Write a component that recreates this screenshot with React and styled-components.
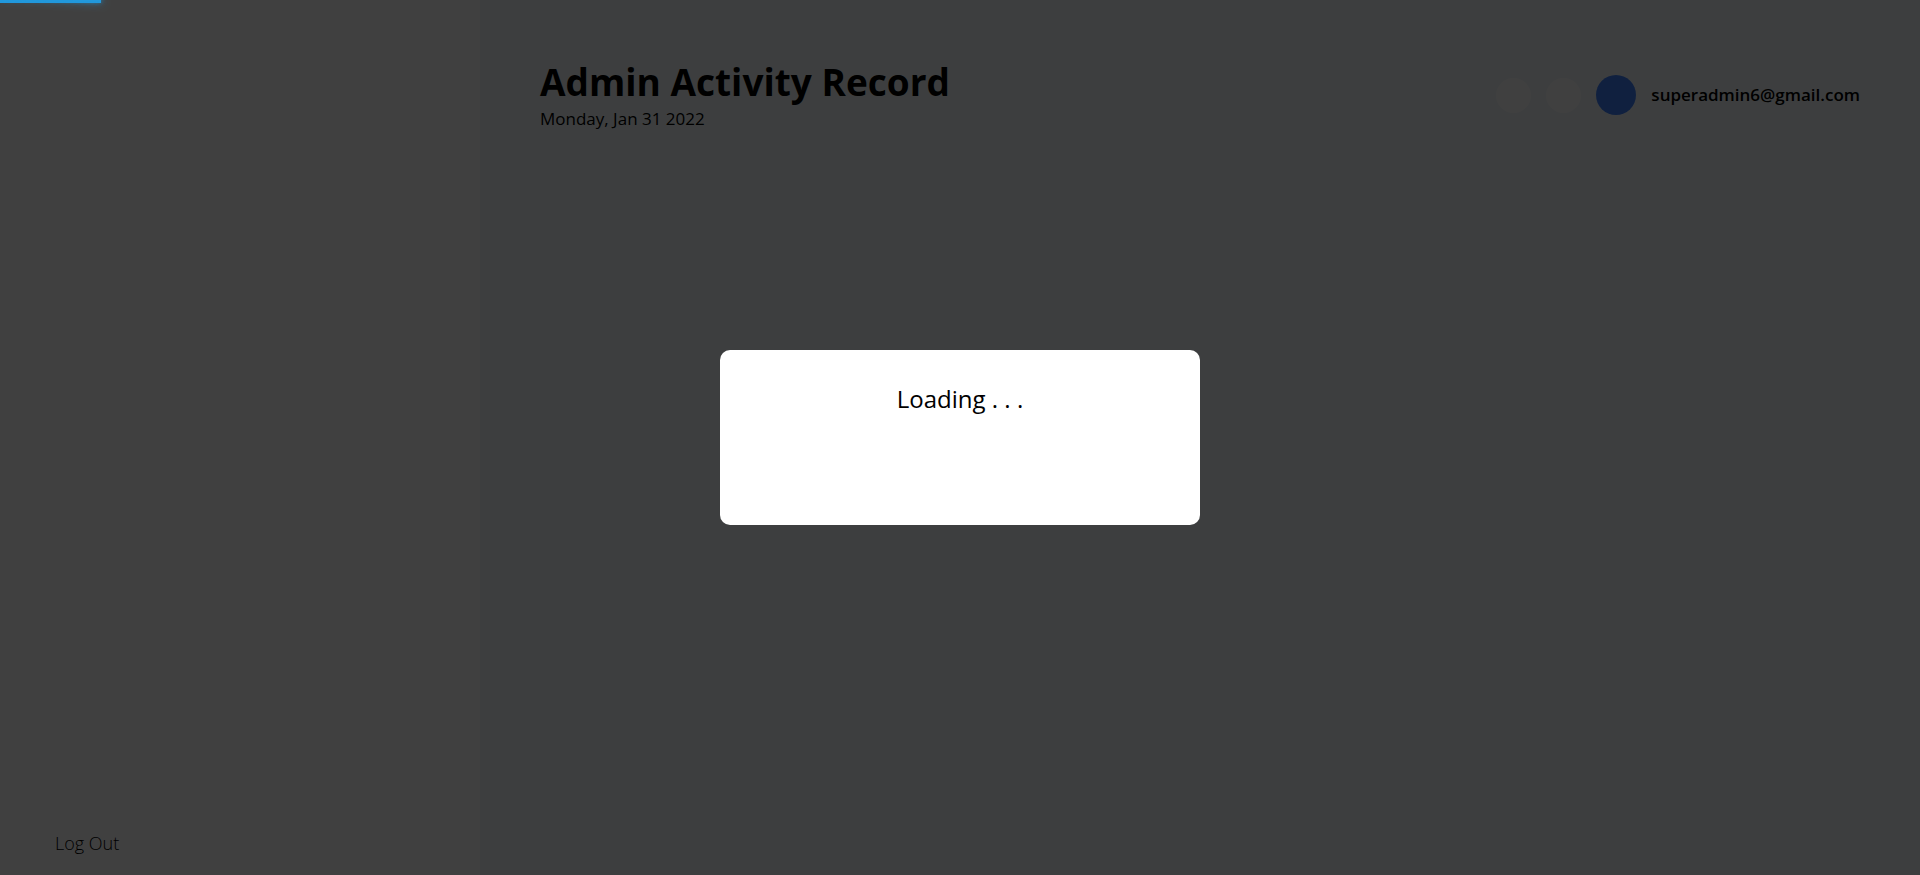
import React from "react";
import styled, { createGlobalStyle } from "styled-components";

const GlobalStyle = createGlobalStyle`
  * { box-sizing: border-box; }
  body {
    margin: 0;
    font-family: "Segoe UI", "Open Sans", "Noto Sans", sans-serif;
    font-size: 17px;
    color: #000;
  }
`;

const Page = styled.div`
  display: grid;
  grid-template-columns: 25% 1fr;
  min-height: 100vh;
`;

const Sidebar = styled.aside`
  display: flex;
  flex-direction: column;
  justify-content: flex-end;
  align-items: flex-start;
  padding: 20px 55px;
  background: #fff;
`;

const LogoutButton = styled.button`
  padding: 0;
  border: 0;
  background: none;
  color: inherit;
  font-family: "Open Sans", sans-serif;
  font-size: 18px;
  font-weight: 300;
  line-height: 24px;
  cursor: pointer;
`;

const Main = styled.main`
  padding: 60px;
  background: #f3f8fc;
`;

const Header = styled.header`
  display: flex;
  justify-content: space-between;
  align-items: center;
`;

const Title = styled.h1`
  margin: 0 0 4px;
  font-family: "Open Sans", sans-serif;
  font-size: 37px;
  font-weight: 700;
  line-height: 44px;
`;

const DateLine = styled.p`
  margin: 0;
  line-height: 22px;
`;

const Account = styled.div`
  display: flex;
  align-items: center;
  gap: 15px;
`;

const RoundButton = styled.button`
  width: 35px;
  height: 35px;
  padding: 0;
  border: 0;
  border-radius: 50%;
  background: #fff;
`;

const Avatar = styled.span`
  width: 40px;
  height: 40px;
  border-radius: 50%;
  background: #4080fc;
`;

const Email = styled.span`
  font-weight: 600;
  line-height: 22px;
`;

const Backdrop = styled.div`
  position: fixed;
  inset: 0;
  display: flex;
  align-items: center;
  justify-content: center;
  background: rgba(0, 0, 0, 0.75);
`;

const Dialog = styled.div`
  width: 25%;
  height: 20%;
  padding: 32px 20px;
  border-radius: 10px;
  background: #fff;
  text-align: center;
`;

const LoadingText = styled.p`
  margin: 0;
  font-size: 24px;
  line-height: 34px;
`;

const ProgressBar = styled.div`
  position: fixed;
  top: 0;
  left: 0;
  height: 3px;
  background: #2299dd;
`;

const ProgressGlow = styled.div`
  height: 100%;
  margin-left: auto;
  width: 100px;
  box-shadow: 0 0 10px #2299dd, 0 0 5px #2299dd;
  transform: rotate(3deg) translate(0, -4px);
`;

export default function App() {
  const progress = 5.25;
  return (
    <>
      <GlobalStyle />
      <Page>
        <Sidebar>
          <LogoutButton type="button">Log Out</LogoutButton>
        </Sidebar>
        <Main>
          <Header>
            <div>
              <Title>Admin Activity Record</Title>
              <DateLine>Monday, Jan 31 2022</DateLine>
            </div>
            <Account>
              <RoundButton type="button" aria-label="Search" />
              <RoundButton type="button" aria-label="Notifications" />
              <Avatar />
              <Email>superadmin6@gmail.com</Email>
            </Account>
          </Header>
        </Main>
      </Page>
      <Backdrop>
        <Dialog role="dialog" aria-modal="true" aria-label="Loading">
          <LoadingText>Loading . . .</LoadingText>
        </Dialog>
      </Backdrop>
      <ProgressBar style={{ width: `${progress}%` }}>
        <ProgressGlow />
      </ProgressBar>
    </>
  );
}
